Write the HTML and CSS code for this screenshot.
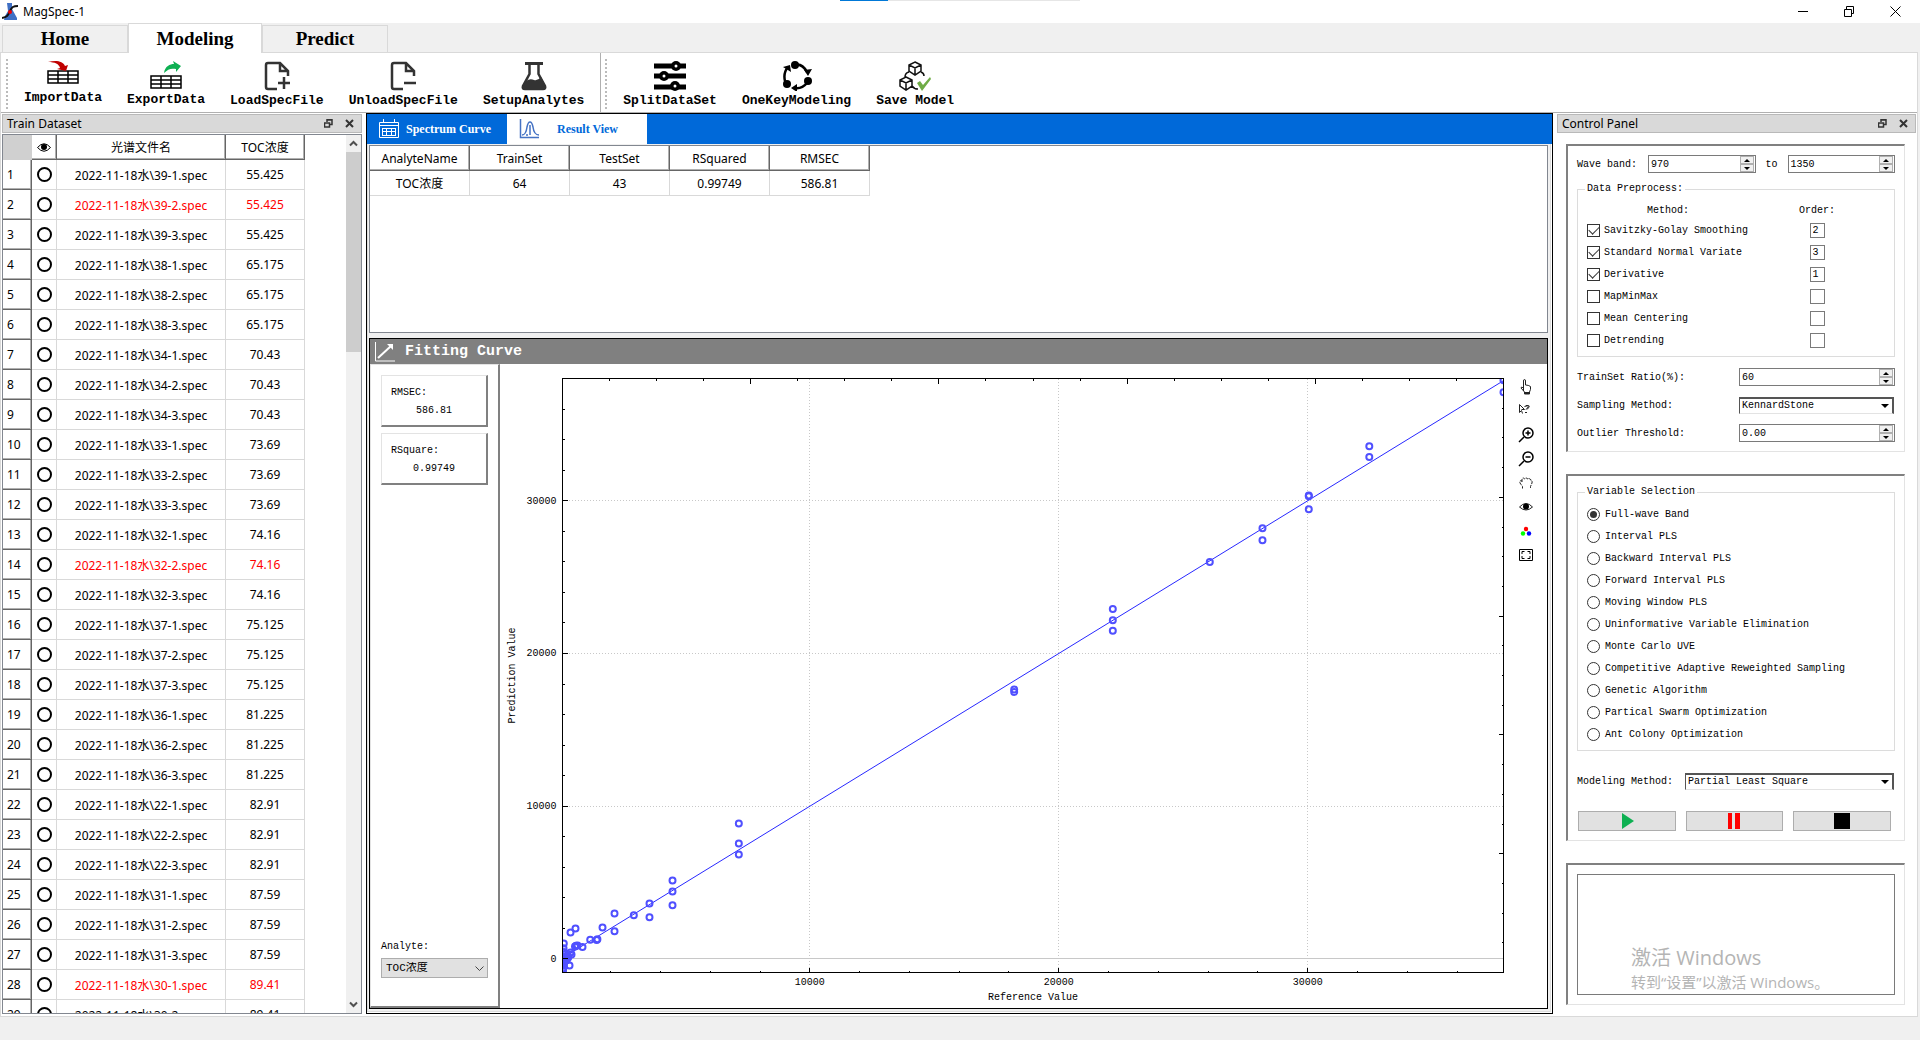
FILE: index.html
```html
<!DOCTYPE html>
<html lang="zh-CN">
<head>
    <meta charset="UTF-8">
    <meta name="viewport" content="width=device-width, initial-scale=1.0">
    <title>MagSpec-1</title>
    <link rel="stylesheet" href="styles.css">
</head>
<body>
    <header class="title-bar">
        <svg class="app-icon" viewBox="0 0 16 17"><path d="M5 0h5v6l5 9v2H2l1-4 3-5z" fill="#3f6fc4"/><path d="M0 15c6-1 6-3 8-7s3-5 8-5" fill="none" stroke="#111" stroke-width="2"/><circle cx="8" cy="9" r="2" fill="#e00"/></svg>
        <span class="app-name">MagSpec-1</span>
        <div class="window-buttons">
            <button aria-label="Minimize"><svg width="10" height="11"><path d="M0 5.500h10" stroke="#000"/></svg></button>
            <button aria-label="Restore"><svg width="10" height="11" fill="none" stroke="#000"><path d="M.5 3.500h7v7h-7zM2.500 3V.5h7v7H8"/></svg></button>
            <button aria-label="Close"><svg width="11" height="11"><path d="M.5.5l10 10M10.500.5l-10 10" stroke="#000"/></svg></button>
        </div>
        <div class="load-strip"></div>
    </header>

    <nav class="main-tabs">
        <button>Home</button>
        <button class="active">Modeling</button>
        <button>Predict</button>
    </nav>

    <main class="page">
        <div class="toolbar">
            <div class="tool-group">
                <span class="grip"></span>
                <button class="tool short">
                    <svg width="32" height="24"><path d="M1 10h30v12H1zM1 14h30M1 18h30M11 10v12M21 10v12" fill="none" stroke="#000" stroke-width="1.500"/><path d="M1 1c8-2 15-1 17 4l3-1-2 6-9-2 3-1C12 3 8 1 1 1z" fill="#c00000"/></svg>
                    ImportData
                </button>
                <button class="tool mid">
                    <svg width="32" height="28"><path d="M1 15h30v12H1zM1 19h30M1 23h30M11 15v12M21 15v12" fill="none" stroke="#000" stroke-width="1.500"/><path d="M14 12c1-7 6-9 10-9l-1-3 8 5-5 6v-3c-5-1-8 0-12 4z" fill="#0eb052"/></svg>
                    ExportData
                </button>
                <button class="tool">
                    <svg width="26" height="30" fill="none" stroke="#333" stroke-width="2.500"><path d="M13 28H4q-2 0-2-2V4q0-2 2-2h12l8 8v5M16 3v7h7M14 22h12M20 16v12" /></svg>
                    LoadSpecFile
                </button>
                <button class="tool">
                    <svg width="26" height="30" fill="none" stroke="#333" stroke-width="2.500"><path d="M13 28H4q-2 0-2-2V4q0-2 2-2h12l8 8v5M16 3v7h7M14 22h12"/></svg>
                    UnloadSpecFile
                </button>
                <button class="tool">
                    <svg width="28" height="30"><path d="M5 1h18v3H5z" fill="#333"/><path d="M9.500 3v10L3 25q-1 3 2 3h18q3 0 2-3l-6.500-12V3" fill="none" stroke="#333" stroke-width="2.500"/><path d="M6 20q4-3 8-1 4 1 7-3l4 9q0 4-3 4H5q-3 0-3-3z" fill="#333"/></svg>
                    SetupAnalytes
                </button>
            </div>
            <div class="tool-group">
                <span class="grip"></span>
                <button class="tool">
                    <svg width="32" height="30"><path d="M0 5h32M0 15h32M0 26h32" stroke="#000" stroke-width="5"/><circle cx="22" cy="5" r="5"/><circle cx="10" cy="15" r="5"/><circle cx="21" cy="25" r="5"/><g fill="#fff"><circle cx="22" cy="5" r="1.500"/><circle cx="10" cy="15" r="1.500"/><circle cx="21" cy="25" r="1.500"/></g></svg>
                    SplitDataSet
                </button>
                <button class="tool">
                    <svg width="30" height="30"><path d="M13 4q7-2 12 7M3 20Q1 12 6 6M25 22q-5 6-12 5" fill="none" stroke="#000" stroke-width="2.500"/><path d="M1 6l7-2 1 7zM22 9l8-1-4 7zM15 23v8l-6-4z"/><circle cx="13" cy="4" r="4"/><circle cx="26" cy="20" r="4"/><circle cx="5" cy="23" r="4"/></svg>
                    OneKeyModeling
                </button>
                <button class="tool">
                    <svg width="32" height="30"><g fill="none" stroke="#111" stroke-width="1.500"><path d="M16 1l6 3v6l-6 4-6-4V4zM10 4l6 3 6-3M16 7v6M7 16l6 3v6l-6 4-6-4v-6zM1 19l6 3 6-3M7 22v6M10 11q-4 1-4 5M22 11q3 1 3 4M13 25q2 3 6 3"/></g><path d="M18 22l3-2 3 4 7-8 1 2-9 12z" fill="#6fac46"/></svg>
                    Save Model
                </button>
            </div>
        </div>

        <div class="workspace">
            <section class="dock">
                <div class="dock-title">
                    <h2>Train Dataset</h2>
                    <button aria-label="Float"><svg width="9" height="9" fill="none" stroke="#333"><path d="M.5 4h5v4h-5zM0 4h6M3 3V.5h5v5H6M3 1h5" stroke-width="1.500"/></svg></button>
                    <button aria-label="Close"><svg width="9" height="9"><path d="M1 1l7 7M8 1L1 8" stroke="#333" stroke-width="2"/></svg></button>
                </div>
                <div class="dataset">
                    <table class="spec-table">
                        <thead>
                            <tr>
                                <th class="corner"></th>
                                <th class="eye"><svg width="14" height="9"><path d="M.5 4.500Q7-3 13.500 4.500 7 12 .5 4.500z" fill="#fff" stroke="#000"/><circle cx="7" cy="4" r="3"/></svg></th>
                                <th class="name">光谱文件名</th>
                                <th class="toc">TOC浓度</th>
                            </tr>
                        </thead>
                        <tbody id="specRows"></tbody>
                    </table>
                    <div class="scroll-track">
                        <svg width="9" height="7"><path d="M1 5.500L4.500 2 8 5.500" fill="none" stroke="#505050" stroke-width="2"/></svg>
                        <div class="scroll-thumb"></div>
                        <svg width="9" height="7"><path d="M1 1.500L4.500 5 8 1.500" fill="none" stroke="#505050" stroke-width="2"/></svg>
                    </div>
                </div>
            </section>

            <section class="center">
                <div class="view-tabs">
                    <button>
                        <svg width="20" height="20" fill="none" stroke="#fff"><path d="M.5 3.500h19v15H.5zM0 6.500h20" /><path d="M4.500 0v4M15.500 0v4M3 9.500h14M3 12.500h14M3 16.500h14M3.500 9v8M7.500 9v8M12.500 9v8M16.500 9v8"/></svg>
                        Spectrum Curve
                    </button>
                    <button class="active">
                        <svg width="21" height="20" fill="none" stroke="#4472c4"><path d="M1.500 0v18.500H20" stroke-width="1.500"/><path d="M3 16q4 0 5-8Q9 3 11 3t3 5q1 8 6 8M11 6v10M7 16h2" stroke-width="1.500"/></svg>
                        <span>Result View</span>
                    </button>
                </div>
                <div class="center-body">
                    <div class="result">
                        <table class="result-table">
                            <thead>
                                <tr><th>AnalyteName</th><th>TrainSet</th><th>TestSet</th><th>RSquared</th><th>RMSEC</th></tr>
                            </thead>
                            <tbody>
                                <tr><td>TOC浓度</td><td>64</td><td>43</td><td>0.99749</td><td>586.81</td></tr>
                            </tbody>
                        </table>
                    </div>

                    <div class="fitting">
                        <div class="fitting-head">
                            <svg width="20" height="20" fill="none" stroke="#fff"><path d="M.5 0v19H20"/><path d="M3 16L16 4" stroke-width="2"/><path d="M12 2h6v6z" fill="#fff" stroke="none"/></svg>
                            <h2>Fitting Curve</h2>
                        </div>
                        <div class="fitting-body">
                            <aside class="stats">
                                <div class="stat">RMSEC:<span>586.81</span></div>
                                <div class="stat">RSquare:<span>0.99749</span></div>
                                <label class="analyte-label" for="analyte">Analyte:</label>
                                <div class="flat-select">
                                    <select id="analyte"><option>TOC浓度</option></select>
                                    <svg width="9" height="6"><path d="M.5.500l4 4 4-4" fill="none" stroke="#444"/></svg>
                                </div>
                            </aside>
                            <svg id="chart" class="chart"></svg>
                            <div class="chart-tools">
                                <button aria-label="Select"><svg width="16" height="16" fill="#fff" stroke="#222"><path d="M5.500 12V2q0-1.500 1-1.500t1 1.500v4q3 0 5 1.500.5 3-1 5.500v2h-5v-2l-3.500-4q0-2 2.500 0"/><path d="M6 14h6" stroke-width="2"/></svg></button>
                                <button aria-label="What is this"><svg width="16" height="16" fill="none" stroke="#222"><path d="M1.500 1.500v8l2-2 1 3M1.500 1.500l5 5h-3"/><path d="M6.500 4q1-2 3-1.500T8 6.500M7.500 9v1"/><path d="M7.500 4q1-2 3-1.500T9 6.500M8.500 9v1"/></svg></button>
                                <button aria-label="Zoom in"><svg width="16" height="16" fill="none" stroke="#000"><circle cx="10" cy="6" r="5" stroke-width="1.500"/><path d="M7.500 6h5M10 3.500v5M6 10l-5 5" stroke-width="1.500"/></svg></button>
                                <button aria-label="Zoom out"><svg width="16" height="16" fill="none" stroke="#000"><circle cx="10" cy="6" r="5" stroke-width="1.500"/><path d="M7.500 6h5M6 10l-5 5" stroke-width="1.500"/></svg></button>
                                <button aria-label="Pan"><svg width="16" height="16" fill="none" stroke="#222"><path d="M4.500 13.500v-2L2 8q-1-3 2-2M4 7V4q1-2 2.500 0Q8 1.500 9.500 4 12 2.500 12.500 5q2 0 1.500 3l-1.500 3.500v2" stroke-dasharray="3 1"/></svg></button>
                                <button aria-label="Show"><svg width="16" height="16"><path d="M1.500 8Q8 1 14.500 8 8 14 1.500 8z" fill="#fff" stroke="#222"/><circle cx="8" cy="7.500" r="3"/></svg></button>
                                <button aria-label="Colors"><svg width="16" height="16"><circle cx="8" cy="6" r="2.200" fill="red"/><circle cx="5" cy="10.500" r="2.200" fill="#0f0"/><circle cx="11" cy="10.500" r="2.200" fill="#00f"/></svg></button>
                                <button aria-label="Fit to view"><svg width="16" height="16" fill="none" stroke="#000"><path d="M1.500 2.500h13v11h-13z"/><path d="M4 7V4.500h2.500M9.500 4.500H12V7M12 9v2.500H9.500M6.500 11.500H4V9"/></svg></button>
                            </div>
                        </div>
                    </div>
                </div>
            </section>

            <section class="dock">
                <div class="dock-title">
                    <h2>Control Panel</h2>
                    <button aria-label="Float"><svg width="9" height="9" fill="none" stroke="#333"><path d="M.5 4h5v4h-5zM0 4h6M3 3V.5h5v5H6M3 1h5" stroke-width="1.500"/></svg></button>
                    <button aria-label="Close"><svg width="9" height="9"><path d="M1 1l7 7M8 1L1 8" stroke="#333" stroke-width="2"/></svg></button>
                </div>
                <div class="controls">
                    <div class="box">
                        <div class="wave-row">
                            <label for="waveFrom">Wave band:</label>
                            <div class="spin"><input id="waveFrom" type="number" value="970"><div class="arrows"><button aria-label="Up"></button><button aria-label="Down"></button></div></div>
                            <label for="waveTo">to</label>
                            <div class="spin"><input id="waveTo" type="number" value="1350"><div class="arrows"><button aria-label="Up"></button><button aria-label="Down"></button></div></div>
                        </div>
                        <fieldset class="preprocess">
                            <legend>Data Preprocess:</legend>
                            <div class="method-head"><span>Method:</span><span>Order:</span></div>
                            <div class="method"><label><input type="checkbox" checked>Savitzky-Golay Smoothing</label><input type="text" value="2" aria-label="Savitzky-Golay order"></div>
                            <div class="method"><label><input type="checkbox" checked>Standard Normal Variate</label><input type="text" value="3" aria-label="SNV order"></div>
                            <div class="method"><label><input type="checkbox" checked>Derivative</label><input type="text" value="1" aria-label="Derivative order"></div>
                            <div class="method"><label><input type="checkbox">MapMinMax</label><input type="text" aria-label="MapMinMax order"></div>
                            <div class="method"><label><input type="checkbox">Mean Centering</label><input type="text" aria-label="Mean Centering order"></div>
                            <div class="method"><label><input type="checkbox">Detrending</label><input type="text" aria-label="Detrending order"></div>
                        </fieldset>
                        <div class="field-row">
                            <label for="ratio">TrainSet Ratio(%):</label>
                            <div class="spin"><input id="ratio" type="number" value="60"><div class="arrows"><button aria-label="Up"></button><button aria-label="Down"></button></div></div>
                        </div>
                        <div class="field-row">
                            <label for="sampling">Sampling Method:</label>
                            <div class="sunken-select"><select id="sampling"><option>KennardStone</option></select></div>
                        </div>
                        <div class="field-row">
                            <label for="outlier">Outlier Threshold:</label>
                            <div class="spin"><input id="outlier" type="number" step="0.01" value="0.00"><div class="arrows"><button aria-label="Up"></button><button aria-label="Down"></button></div></div>
                        </div>
                    </div>

                    <div class="box">
                        <fieldset class="variables">
                            <legend>Variable Selection</legend>
                            <label><input type="radio" name="variable" checked>Full-wave Band</label>
                            <label><input type="radio" name="variable">Interval PLS</label>
                            <label><input type="radio" name="variable">Backward Interval PLS</label>
                            <label><input type="radio" name="variable">Forward Interval PLS</label>
                            <label><input type="radio" name="variable">Moving Window PLS</label>
                            <label><input type="radio" name="variable">Uninformative Variable Elimination</label>
                            <label><input type="radio" name="variable">Monte Carlo UVE</label>
                            <label><input type="radio" name="variable">Competitive Adaptive Reweighted Sampling</label>
                            <label><input type="radio" name="variable">Genetic Algorithm</label>
                            <label><input type="radio" name="variable">Partical Swarm Optimization</label>
                            <label><input type="radio" name="variable">Ant Colony Optimization</label>
                        </fieldset>
                        <div class="field-row modeling">
                            <label for="modeling">Modeling Method:</label>
                            <div class="sunken-select"><select id="modeling"><option>Partial Least Square</option></select></div>
                        </div>
                        <div class="run-buttons">
                            <button aria-label="Run"><svg width="16" height="16"><path d="M3 0l12 8-12 8z" fill="#0eb052"/></svg></button>
                            <button aria-label="Pause"><svg width="16" height="16"><path d="M2 0h4v16H2zM9 0h5v16H9z" fill="red"/></svg></button>
                            <button aria-label="Stop"><svg width="16" height="16"><path d="M0 0h16v16H0z"/></svg></button>
                        </div>
                    </div>

                    <div class="box log">
                        <textarea aria-label="Log" readonly></textarea>
                        <div class="watermark">
                            <p class="big">激活 Windows</p>
                            <p>转到“设置”以激活 Windows。</p>
                        </div>
                    </div>
                </div>
            </section>
        </div>
    </main>
    <footer class="status-bar"></footer>
    <script src="app.js"></script>
</body>
</html>
```
FILE: styles.css
```css
* {
    box-sizing: border-box;
}
body {
    margin: 0;
    height: 100vh;
    display: flex;
    flex-direction: column;
    background: #f0f0f0;
    color: #000;
    font-family: "Noto Sans", "Noto Sans CJK SC", sans-serif;
    font-size: 12px;
}
button, input, select, textarea {
    font: inherit;
    color: inherit;
    margin: 0;
    padding: 0;
}
button {
    border: none;
    background: none;
    border-radius: 0;
}
h2, p {
    margin: 0;
    font-weight: normal;
}
svg {
    display: block;
    flex: none;
}

/* title bar */
.title-bar {
    position: relative;
    flex: none;
    display: flex;
    align-items: center;
    height: 23px;
    padding: 0 2px;
    background: #fff;
}
.app-icon {
    width: 16px;
    height: 17px;
    margin-right: 5px;
}
.window-buttons {
    margin-left: auto;
    display: flex;
}
.window-buttons button {
    width: 46px;
    height: 20px;
    display: flex;
    align-items: center;
    justify-content: center;
}
.load-strip {
    position: absolute;
    top: 0;
    left: 43.75%;
    width: 12.5%;
    height: 1px;
    background: linear-gradient(90deg, #0078d7 20%, #e6e6e6 20%);
}

/* main tabs */
.main-tabs {
    flex: none;
    display: flex;
    align-items: flex-end;
    height: 29px;
    padding-left: 2px;
}
.main-tabs button {
    width: 126px;
    height: 27px;
    border: 1px solid #d9d9d9;
    border-bottom: none;
    font-family: "Liberation Serif", serif;
    font-size: 19px;
    font-weight: bold;
}
.main-tabs .active {
    width: 134px;
    height: 30px;
    margin-bottom: -1px;
    background: #fff;
    z-index: 1;
}

.page {
    flex: 1;
    min-height: 0;
    display: flex;
    flex-direction: column;
    margin-right: 2px;
    border: 1px solid #d9d9d9;
    background: #fff;
}

/* toolbar */
.toolbar {
    flex: none;
    display: flex;
    height: 60px;
    border-bottom: 1px solid #b0b0b0;
}
.tool-group {
    display: flex;
    align-items: flex-start;
    gap: 25px;
    padding: 8px 16px 0 5px;
}
.tool-group + .tool-group {
    padding-left: 4px;
    border-left: 1px solid #b0b0b0;
}
.grip {
    width: 2px;
    height: 50px;
    margin: -2px -9px 0 0;
    background: repeating-linear-gradient(#bbb 0 2px, transparent 2px 4px);
}
.tool {
    display: flex;
    flex-direction: column;
    align-items: center;
    gap: 2px;
    font-family: "Liberation Mono", monospace;
    font-size: 13px;
    line-height: 16px;
    font-weight: bold;
    white-space: nowrap;
}
.tool.short {
    gap: 5px;
}
.tool.mid {
    gap: 3px;
}

/* docks */
.workspace {
    flex: 1;
    min-height: 0;
    display: grid;
    grid-template-columns: 360px minmax(0, 1fr) 359px;
    grid-template-rows: minmax(0, 1fr);
    gap: 4px;
    padding: 0 1px 2px;
}
.dock {
    display: flex;
    flex-direction: column;
    min-height: 0;
    padding-top: 1px;
}
.dock-title {
    flex: none;
    display: flex;
    align-items: center;
    height: 19px;
    padding: 0 1px 0 4px;
    border: 1px solid #b9b9b9;
    background: #d9d9d9;
}
.dock-title h2 {
    flex: 1;
    font-size: 12px;
}
.dock-title button {
    width: 21px;
    height: 16px;
    display: flex;
    align-items: center;
    justify-content: center;
}
.dataset {
    flex: 1;
    min-height: 0;
    display: flex;
    justify-content: space-between;
    margin-top: 1px;
    border: 1px solid #828790;
    overflow: hidden;
}
table {
    border-spacing: 0;
    table-layout: fixed;
}
th {
    font-weight: normal;
}
th, td {
    padding: 0;
    text-align: center;
    white-space: nowrap;
    border-right: 1px solid #d9d9d9;
    border-bottom: 1px solid #d9d9d9;
}
th {
    height: 25px;
    border-color: #666;
    box-shadow: inset -1px -1px #b0b0b0;
}
.spec-table {
    width: 302px;
    height: 0;
}
.spec-table td, .spec-table tbody th {
    height: 30px;
}
.spec-table tbody th {
    padding-left: 4px;
    text-align: left;
}
.spec-table .corner {
    width: 29px;
    border: none;
    box-shadow: none;
    background: #d0d0d0;
}
.spec-table .eye {
    width: 25px;
}
.spec-table .name {
    width: 169px;
}
.spec-table .toc {
    width: 79px;
}
.eye svg {
    margin: 0 auto;
}
.ring {
    width: 15px;
    height: 15px;
    margin: 0 auto;
    border: 2px solid #000;
    border-radius: 50%;
}
.outlier td {
    color: #f00;
}
.scroll-track {
    width: 15px;
    display: flex;
    flex-direction: column;
    align-items: center;
    gap: 5px;
    padding: 5px 0;
    background: #f0f0f0;
}
.scroll-thumb {
    width: 15px;
    height: 23%;
    margin-bottom: auto;
    background: #cdcdcd;
}

/* center */
.center {
    display: flex;
    flex-direction: column;
    min-height: 0;
    border: 1px solid #000;
}
.view-tabs {
    flex: none;
    display: flex;
    height: 30px;
    background: #0069d9;
}
.view-tabs button {
    display: flex;
    align-items: center;
    gap: 7px;
    width: 140px;
    padding-left: 12px;
    font-family: "Liberation Serif", serif;
    font-size: 12px;
    font-weight: bold;
    color: #fff;
}
.view-tabs .active {
    gap: 17px;
    background: #fff;
    color: #0069d9;
}
.center-body {
    flex: 1;
    min-height: 0;
    display: flex;
    flex-direction: column;
    gap: 5px;
    margin: 0 1px 1px 0;
    padding: 1px 2px 2px 1px;
    border: 1px solid #dcdcdc;
    border-top: none;
    background: #f0f0f0;
}
.result {
    flex: none;
    height: 188px;
    border: 1px solid #828790;
    background: #fff;
}
.result-table {
    width: 500px;
}
.result-table td {
    height: 25px;
}
.fitting {
    flex: 1;
    min-height: 0;
    display: flex;
    flex-direction: column;
    border: 1px solid #000;
    background: #fff;
}
.fitting-head {
    flex: none;
    display: flex;
    align-items: center;
    gap: 10px;
    height: 25px;
    padding-left: 5px;
    background: #808080;
    color: #fff;
}
.fitting-head h2 {
    font: bold 15px "Liberation Mono", monospace;
}
.fitting-body {
    flex: 1;
    min-height: 0;
    display: flex;
}
.stats, .controls, .chart {
    font-family: "Liberation Mono", "Noto Sans CJK SC", monospace;
    font-size: 10px;
}
.stats {
    width: 130px;
    display: flex;
    flex-direction: column;
    gap: 6px;
    padding: 10px;
    border: 1px solid #e3e3e3;
    border-right: 2px solid #808080;
    border-bottom: 2px solid #808080;
}
.stat {
    display: flex;
    flex-direction: column;
    height: 52px;
    padding: 8px 9px;
    line-height: 18px;
    border: 1px solid #e3e3e3;
    border-right: 2px solid #808080;
    border-bottom: 2px solid #808080;
}
.stat span {
    text-align: center;
}
.analyte-label {
    margin-top: auto;
}
.flat-select {
    position: relative;
    height: 20px;
    margin-bottom: 18px;
}
.flat-select select {
    appearance: none;
    width: 100%;
    height: 100%;
    padding-left: 4px;
    border: 1px solid #adadad;
    border-radius: 0;
    background: #e1e1e1;
    font-size: 11px;
}
.flat-select svg {
    position: absolute;
    right: 4px;
    top: 8px;
    pointer-events: none;
}
.chart {
    flex: 1;
    min-width: 0;
    height: 100%;
}
.chart-tools {
    display: flex;
    flex-direction: column;
    gap: 8px;
    width: 29px;
    padding-top: 15px;
}
.chart-tools button {
    width: 16px;
    height: 16px;
}

/* control panel */
.controls {
    flex: 1;
    min-height: 0;
    display: flex;
    flex-direction: column;
    gap: 22px;
    padding: 11px 11px 9px 9px;
}
.box {
    border: 1px solid #e3e3e3;
    border-top: 2px solid #808080;
    border-left: 2px solid #808080;
    padding: 9px;
}
.box label {
    white-space: nowrap;
}
.wave-row {
    display: grid;
    grid-template-columns: 71px minmax(0, 1fr) 32px minmax(0, 1fr);
    align-items: center;
}
.wave-row .spin + label {
    text-align: center;
}
.spin {
    display: flex;
    height: 18px;
    border: 1px solid #7a7a7a;
    background: #fff;
}
.spin input {
    flex: 1;
    min-width: 0;
    padding-left: 2px;
    border: none;
    background: none;
    appearance: textfield;
}
.spin input::-webkit-inner-spin-button {
    appearance: none;
}
.arrows {
    display: flex;
    flex-direction: column;
    width: 14px;
    margin-right: 1px;
}
.arrows button {
    flex: 1;
    display: flex;
    align-items: center;
    justify-content: center;
    border: 1px solid #b0b0b0;
    background: #f0f0f0;
}
.arrows button::before {
    content: "";
    border: 3px solid transparent;
    border-top: none;
    border-bottom: 3px solid #000;
}
.arrows button + button::before {
    border-top: 3px solid #000;
    border-bottom: none;
}
fieldset {
    min-width: 0;
    margin: 0;
    padding: 0 9px;
    border: 1px solid #dcdcdc;
}
legend {
    margin-left: -2px;
    padding: 0 2px;
    line-height: 14px;
}
.preprocess {
    margin: 9px 0 11px;
    padding-bottom: 5px;
}
.method-head, .method {
    display: grid;
    grid-template-columns: minmax(0, 1fr) 136px;
    align-items: center;
    height: 22px;
}
.method-head {
    height: 18px;
    margin-top: 5px;
    text-align: center;
}
.method label, .variables label {
    display: flex;
    align-items: center;
    gap: 4px;
}
.method input[type="text"] {
    justify-self: center;
    width: 15px;
    height: 15px;
    padding-left: 2px;
    border: 1px solid #7a7a7a;
}
input[type="checkbox"], input[type="radio"] {
    appearance: none;
    flex: none;
    width: 13px;
    height: 13px;
    border: 1px solid #333;
    background: #fff;
    display: flex;
    justify-content: center;
    align-items: center;
}
input[type="checkbox"]:checked::before {
    content: "";
    width: 9px;
    height: 5px;
    margin-top: -2px;
    border-left: 1px solid #333;
    border-bottom: 1px solid #333;
    transform: rotate(-45deg);
}
input[type="radio"] {
    border-radius: 50%;
}
input[type="radio"]:checked::before {
    content: "";
    width: 7px;
    height: 7px;
    border-radius: 50%;
    background: #333;
}
.field-row {
    display: grid;
    grid-template-columns: 1fr 156px;
    align-items: center;
    height: 18px;
    margin-top: 10px;
}
.sunken-select {
    position: relative;
    height: 17px;
    margin-right: 1px;
}
.sunken-select select {
    appearance: none;
    width: 100%;
    height: 17px;
    padding-left: 2px;
    border: 1px solid #555;
    border-width: 2px 2px 1px 1px;
    border-bottom-color: #e3e3e3;
    border-radius: 0;
    background: #fff;
}
.sunken-select::after {
    content: "";
    position: absolute;
    right: 5px;
    top: 7px;
    border: 4px solid transparent;
    border-top: 4px solid #000;
    border-bottom: none;
}
.variables {
    padding-bottom: 5px;
}
.variables legend {
    margin-bottom: 4px;
}
.variables label {
    height: 22px;
    gap: 5px;
}
.field-row.modeling {
    grid-template-columns: 108px 1fr;
    margin: 21px 0;
}
.run-buttons {
    display: grid;
    grid-template-columns: repeat(3, 1fr);
    gap: 10px;
    padding: 0 4px 0 1px;
}
.run-buttons button {
    display: flex;
    justify-content: center;
    align-items: center;
    height: 20px;
    border: 1px solid #adadad;
    background: #e1e1e1;
}
.log {
    position: relative;
    flex: 1;
    min-height: 0;
    display: flex;
}
.log textarea {
    flex: 1;
    resize: none;
    border: 1px solid #7a7a7a;
    border-radius: 0;
}
.watermark {
    position: absolute;
    left: 63px;
    bottom: 11px;
    font-family: "Open Sans", "Noto Sans CJK SC", sans-serif;
    font-size: 15px;
    line-height: 22px;
    color: #b4b4b4;
    white-space: nowrap;
}
.watermark .big {
    font-size: 20px;
    line-height: 26px;
}
.status-bar {
    flex: none;
    height: 23px;
}

/* chart */
.chart .frame, .chart .tick {
    fill: none;
    stroke: #000;
    shape-rendering: crispEdges;
}
.chart .grid {
    stroke: #c8c8c8;
    stroke-dasharray: 1 2;
    shape-rendering: crispEdges;
}
.chart .zero {
    stroke: #c8c8c8;
    shape-rendering: crispEdges;
}
.chart .fit {
    stroke: #2828ff;
}
.chart .point {
    fill: none;
    stroke: #5050ff;
    stroke-width: 2;
}
```
FILE: app.js
```js
const samples = [
    ['39', '55.425'], ['38', '65.175'], ['34', '70.43'], ['33', '73.69'], ['32', '74.16'],
    ['37', '75.125'], ['36', '81.225'], ['22', '82.91'], ['31', '87.59'], ['30', '89.41']
];
const outliers = [2, 14, 28];
const rowCount = 29;

function renderRows() {
    const body = document.getElementById('specRows');
    let html = '';
    for (let i = 0; i < rowCount; i++) {
        const [id, toc] = samples[Math.floor(i / 3)];
        html += `
            <tr class="${outliers.includes(i + 1) ? 'outlier' : ''}">
                <th>${i + 1}</th>
                <td><div class="ring"></div></td>
                <td>2022-11-18水\\${id}-${i % 3 + 1}.spec</td>
                <td>${toc}</td>
            </tr>`;
    }
    body.innerHTML = html;
}

// [reference, prediction]
const points = [
    [37860, 37880], [37860, 37099], [32470, 33563], [32470, 32862], [30040, 30334], [30040, 30300],
    [30040, 29437], [28180, 28193], [28180, 27407], [26064, 25985], [22169, 22908], [22169, 22168],
    [22169, 21493], [18209, 17649], [18209, 17485], [7149, 8874], [7149, 7564], [7149, 6843],
    [4486, 5141], [4486, 4420], [4486, 3523], [3562, 3635], [3562, 2737], [2932, 2868],
    [2157, 2980], [2157, 1821], [1675, 2063], [1470, 1290], [1440, 1240], [1181, 1257],
    [871, 786], [671, 884], [610, 860], [570, 825], [590, 1997], [390, 1735],
    [430, 295], [390, 420], [350, -430], [300, 100], [280, 250], [240, -80],
    [120, 1020], [110, 700], [120, 450], [150, 300], [170, 150], [130, 0],
    [160, -150], [110, -300], [120, -450], [100, -600], [90, -750], [200, 0]
];

const xRange = [68, 37860];
const yRange = [-884, 38000];

function drawChart() {
    const svg = document.getElementById('chart');
    const w = svg.clientWidth;
    const h = svg.clientHeight;
    const left = 62.5, top = 14.5, right = w - 14.5, bottom = h - 35.5;
    const sx = v => left + (v - xRange[0]) / (xRange[1] - xRange[0]) * (right - left);
    const sy = v => bottom - (v - yRange[0]) / (yRange[1] - yRange[0]) * (bottom - top);
    const line = (cls, x1, y1, x2, y2) => `<line class="${cls}" x1="${x1}" y1="${y1}" x2="${x2}" y2="${y2}"/>`;
    let out = `<clipPath id="plot"><rect x="${left}" y="${top}" width="${right - left}" height="${bottom - top}"/></clipPath>`;

    for (let v = 10000; v <= 30000; v += 10000) {
        out += line('grid', sx(v), top, sx(v), bottom);
        out += line('grid', left, sy(v), right, sy(v));
        out += `<text x="${sx(v)}" y="${bottom + 12}" text-anchor="middle">${v}</text>`;
    }
    for (let v = 0; v <= 30000; v += 10000) {
        out += `<text x="${left - 6}" y="${sy(v) + 3}" text-anchor="end">${v}</text>`;
    }
    out += line('zero', left, sy(0), right, sy(0));

    out += `<g clip-path="url(#plot)">${line('fit', sx(0), sy(0), sx(38000), sy(38000))}`;
    points.forEach(([x, y]) => {
        out += `<circle class="point" cx="${sx(x)}" cy="${sy(y)}" r="3"/>`;
    });
    out += '</g>';

    for (let v = 0; v < 38000; v += 2000) {
        const len = v % 10000 === 0 ? 5 : 2;
        if (v > 0) {
            out += line('tick', sx(v), bottom, sx(v), bottom - len);
        }
        out += line('tick', left, sy(v), left + len, sy(v));
    }
    // the top and right axes keep their own 0-5 scale
    for (let i = 1; i < 20; i++) {
        const len = i % 4 === 0 ? 5 : 2;
        const x = left + (right - left) * i / 20;
        const y = top + (bottom - top) * i / 20;
        out += line('tick', x, top, x, top + len);
        out += line('tick', right, y, right - len, y);
    }
    out += `<rect class="frame" x="${left}" y="${top}" width="${right - left}" height="${bottom - top}"/>`;
    out += `<text x="${(left + right) / 2}" y="${bottom + 27}" text-anchor="middle">Reference Value</text>`;
    out += `<text transform="translate(15 ${(top + bottom) / 2}) rotate(-90)" text-anchor="middle">Prediction Value</text>`;
    svg.innerHTML = out;
}

renderRows();
drawChart();
window.addEventListener('resize', drawChart);
```
